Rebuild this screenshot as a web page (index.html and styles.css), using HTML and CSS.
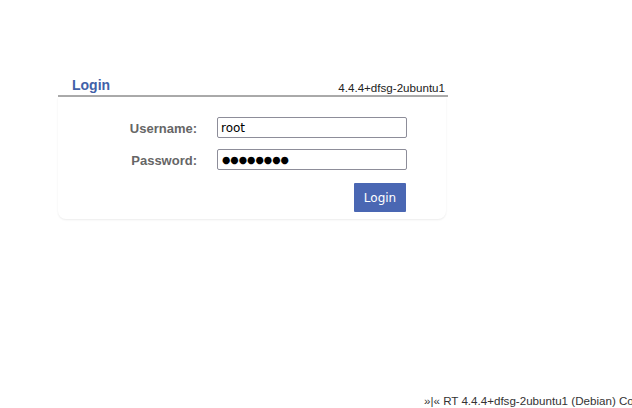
FILE: index.html
```
<!DOCTYPE html>
<html>
<head>
<meta charset="utf-8">
<link rel="stylesheet" href="styles.css">
</head>
<body>
<div class="page">
  <div class="login-box">
    <div class="titlebar">
      <div class="title">Login</div>
      <div class="version">4.4.4+dfsg-2ubuntu1</div>
    </div>
    <form class="panel">
      <div class="row">
        <label class="label">Username:</label>
        <input class="field" type="text" value="root">
      </div>
      <div class="row">
        <label class="label">Password:</label>
        <input class="field secret" type="text" value="●●●●●●●●" readonly>
      </div>
      <div class="actions">
        <button class="btn" type="button">Login</button>
      </div>
    </form>
  </div>
  <div class="footer">»|« RT 4.4.4+dfsg-2ubuntu1 (Debian) Copyright 1996-2019 Best Practical Solutions, LLC.</div>
</div>
</body>
</html>
```
FILE: styles.css
```
html, body {
  margin: 0;
  padding: 0;
  overflow: hidden;
  background: #fff;
}
body {
  font-family: "Liberation Sans", Arial, sans-serif;
  color: #333;
}
.page {
  display: flex;
  flex-direction: column;
  height: 408px;
}
.login-box {
  margin: 75px 0 0 58px;
  width: 390px;
}
.titlebar {
  display: flex;
  justify-content: space-between;
  align-items: flex-end;
  height: 20px;
  border-bottom: 2px solid #aaaaaa;
  padding: 0 3px 0 14px;
}
.title {
  font-size: 14px;
  line-height: 17px;
  font-weight: bold;
  color: #4161a8;
  padding-bottom: 1px;
}
.version {
  font-size: 11.6px;
  line-height: 13px;
  color: #222;
  padding-bottom: 1px;
}
.panel {
  width: 388px;
  box-sizing: border-box;
  padding: 20px 0 7px 0;
  border-radius: 0 0 8px 8px;
  box-shadow: 0 1px 2px rgba(0, 0, 0, 0.08);
  display: flex;
  flex-direction: column;
  gap: 11px;
}
.row {
  display: grid;
  grid-template-columns: 139px 190px;
  column-gap: 20px;
  align-items: center;
}
.label {
  text-align: right;
  font-size: 13px;
  font-weight: bold;
  color: #666;
  padding-top: 2px;
}
.field {
  box-sizing: border-box;
  width: 190px;
  height: 21px;
  margin: 0;
  border: 1px solid #8d8d99;
  border-radius: 2px;
  padding: 0 3px;
  font-family: "DejaVu Sans", sans-serif;
  font-size: 12px;
  color: #000;
  outline: none;
}
.secret {
  font-size: 9.6px;
  padding-left: 4px;
}
.actions {
  display: flex;
  justify-content: flex-end;
  padding-right: 40px;
  margin-top: 2px;
}
.btn {
  width: 52px;
  height: 29px;
  margin: 0;
  border: none;
  border-radius: 1px;
  background: #4a67b3;
  color: #fff;
  font-family: "DejaVu Sans", sans-serif;
  font-size: 12px;
  padding: 0;
}
.footer {
  margin-top: auto;
  margin-bottom: 1px;
  padding-left: 424px;
  white-space: nowrap;
  overflow: hidden;
  font-size: 11.6px;
  line-height: 13px;
  color: #333;
}
```
